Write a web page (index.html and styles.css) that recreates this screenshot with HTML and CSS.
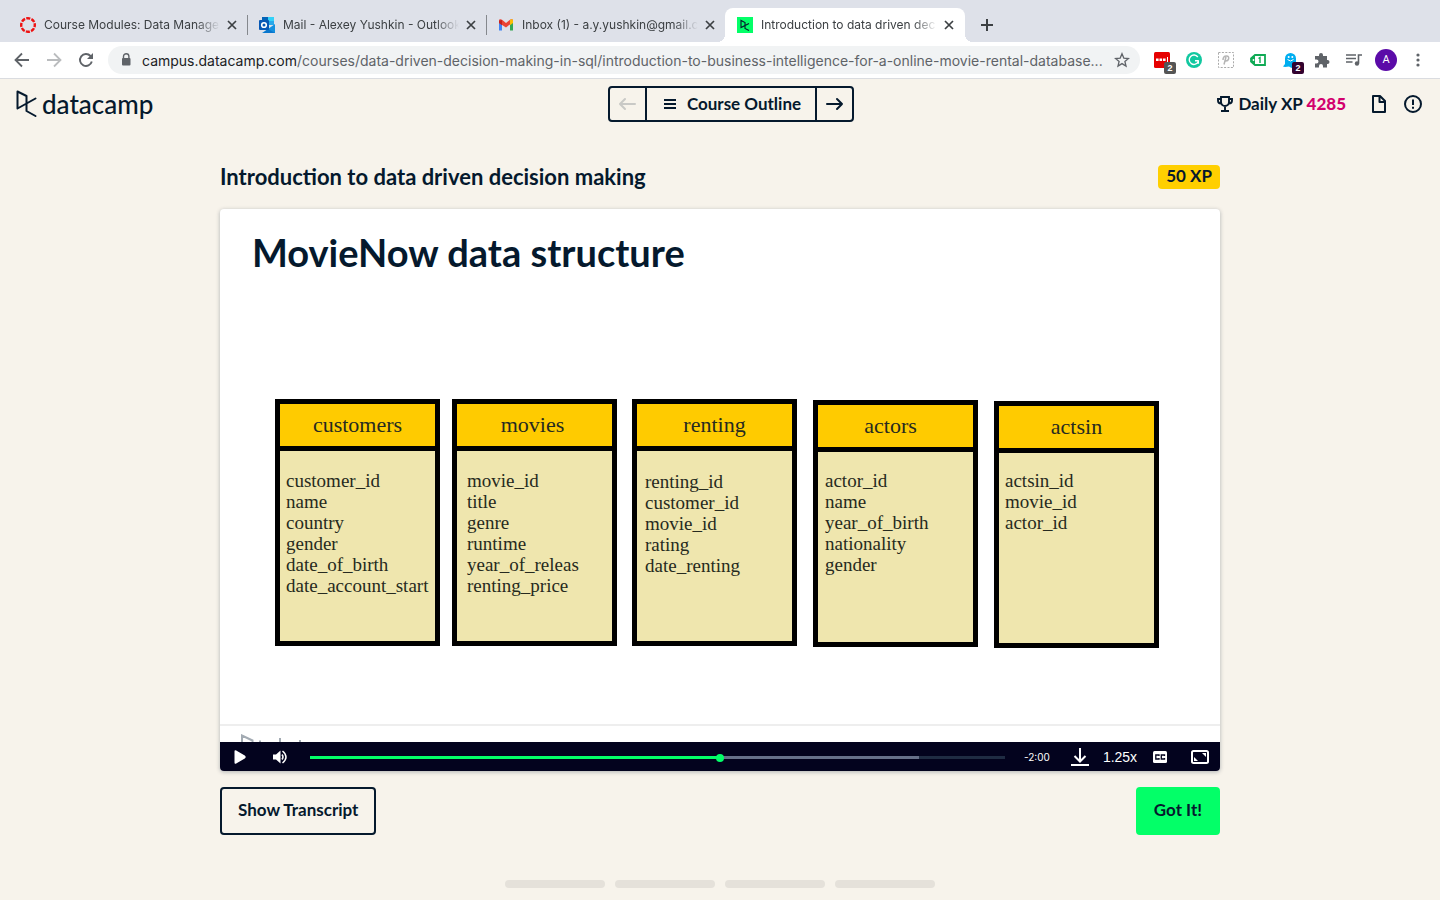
FILE: index.html
```html
<!DOCTYPE html>
<html lang="en">
<head>
<meta charset="utf-8">
<meta name="viewport" content="width=device-width, initial-scale=1">
<title>Introduction to data driven decision making</title>
<link rel="stylesheet" href="styles.css">
</head>
<body>
<svg class="defs" aria-hidden="true">
  <symbol id="close" viewBox="0 0 16 16"><path d="M4 4l8 8M12 4l-8 8" fill="none" stroke="#3c4043" stroke-width="1.700"/></symbol>
  <symbol id="mark" viewBox="0 0 22 28"><path d="M19.500 8.500L1.500 18.500V1.500L10.500 6v15l9 5" fill="none" stroke="currentColor" stroke-width="2" stroke-linejoin="round" stroke-linecap="round"/></symbol>
</svg>

<div class="tabs" role="tablist">
  <div class="tab" role="tab">
    <svg class="fav" viewBox="0 0 16 16"><circle cx="8" cy="8" r="6.800" fill="none" stroke="#ee1111" stroke-width="2.400" stroke-dasharray="4.100 1.240" stroke-dashoffset="2"/></svg>
    <span class="tab-title">Course Modules: Data Manage</span>
    <button class="tab-close" aria-label="Close tab"><svg><use href="#close"/></svg></button>
  </div>
  <div class="tab split" role="tab">
    <svg class="fav" viewBox="0 0 16 16"><path d="M3 0h12v8H3z" fill="#28a8ea"/><path d="M3 0h6v4H3z" fill="#0364b8"/><path d="M9 0h6v4H9z" fill="#33d1f8"/><path d="M16 7v9H3l6-4z" fill="#1490df"/><path d="M16 16H4l5-4z" fill="#0a76cc"/><rect y="3" width="10" height="10" rx="1" fill="#0758b5"/><circle cx="5" cy="8" r="2.300" fill="none" stroke="#fff" stroke-width="1.600"/></svg>
    <span class="tab-title">Mail - Alexey Yushkin - Outlook</span>
    <button class="tab-close" aria-label="Close tab"><svg><use href="#close"/></svg></button>
  </div>
  <div class="tab split" role="tab">
    <svg class="fav" viewBox="0 0 16 16"><path d="M1 4v9.500h3V6z" fill="#4285f4"/><path d="M15 4v9.500h-3V6z" fill="#34a853"/><path d="M1 3.500C1 2 3 2 4 2.800L8 6l4-3.200c1-.8 3-.8 3 .7V5l-7 5.500L1 6z" fill="#ea4335"/><path d="M12 3l1-.7c1-.4 2 .2 2 1.200V6l-3 2.300z" fill="#fbbc04"/><path d="M1 3.800V6l3 2.300V3z" fill="#c5221f"/></svg>
    <span class="tab-title">Inbox (1) - a.y.yushkin@gmail.c</span>
    <button class="tab-close" aria-label="Close tab"><svg><use href="#close"/></svg></button>
  </div>
  <div class="tab active" role="tab" aria-selected="true">
    <svg class="fav" viewBox="0 0 16 16"><path d="M0 0h16v16H0z" fill="#03ff68"/><path d="M12 6.500L4 10.500v-7l4 2v6l4 2" fill="none" stroke="#05192d" stroke-width="1.100"/></svg>
    <span class="tab-title">Introduction to data driven dec</span>
    <button class="tab-close" aria-label="Close tab"><svg><use href="#close"/></svg></button>
  </div>
  <button class="new-tab" aria-label="New tab"><svg viewBox="0 0 16 16"><path d="M8 2v12M2 8h12" stroke="#3c4043" stroke-width="2"/></svg></button>
</div>

<div class="toolbar">
  <button class="tool" aria-label="Back"><svg viewBox="0 0 16 16"><path d="M15 8H2M8 1.500L1.500 8 8 14.500" fill="none" stroke="#5f6368" stroke-width="1.800"/></svg></button>
  <button class="tool" aria-label="Forward"><svg viewBox="0 0 16 16"><path d="M1 8h13M8 1.500L14.500 8 8 14.500" fill="none" stroke="#babcbe" stroke-width="1.800"/></svg></button>
  <button class="tool" aria-label="Reload"><svg viewBox="0 0 16 16"><path d="M13.800 9.500A6 6 0 1 1 12.500 4L14 5.500" fill="none" stroke="#5f6368" stroke-width="1.900"/><path d="M15 1v6H9z" fill="#5f6368"/></svg></button>
  <div class="omnibox">
    <svg class="lock" viewBox="0 0 16 16"><path d="M5.500 7V4.500a2.700 2.700 0 0 1 5.400 0V7" fill="none" stroke="#5f6368" stroke-width="1.400"/><rect x="4" y="6" width="8.500" height="7.500" rx="1" fill="#5f6368"/></svg>
    <div class="url" role="textbox" aria-label="Address" tabindex="0"><span class="host">campus.datacamp.com</span>/courses/data-driven-decision-making-in-sql/introduction-to-business-intelligence-for-a-online-movie-rental-database...</div>
    <button class="star" aria-label="Bookmark"><svg viewBox="0 0 16 16"><path d="M8 1.800l1.800 4.300 4.700.4-3.600 3 1.100 4.600L8 11.600l-4 2.500 1.100-4.600-3.600-3 4.700-.4z" fill="none" stroke="#5f6368" stroke-width="1.300"/></svg></button>
  </div>
  <div class="extensions">
    <button class="tool" aria-label="LastPass"><svg viewBox="0 0 16 16"><rect width="16" height="16" rx="1.500" fill="#e60000"/><path d="M2 6.500h2.600v2.500H2zM5.500 6.500h2.600v2.500H5.500zM9 6.500h2.600v2.500H9zM13 5h1v5h-1z" fill="#fff"/></svg><span class="count">2</span></button>
    <button class="tool" aria-label="Grammarly"><svg viewBox="0 0 16 16"><circle cx="8" cy="8" r="8" fill="#11c8a0"/><path d="M11.800 5A4.700 4.700 0 1 0 12.300 9.500M12.800 8.800H9M12.300 8.800v3" fill="none" stroke="#fff" stroke-width="1.400"/></svg></button>
    <button class="tool" aria-label="Page extension"><svg viewBox="0 0 16 16"><rect x=".5" y=".5" width="15" height="15" fill="none" stroke="#aaa" stroke-dasharray="2 1.400"/><path d="M6 12.500L8 5M5 8c0-2.500 1.500-4 3.500-4S11 5.500 10.600 7 8.500 9.200 7 9" fill="none" stroke="#b5b5b5" stroke-width="1.500"/></svg></button>
    <button class="tool" aria-label="Tag extension"><svg viewBox="0 0 16 16"><path d="M5 3h10v10H5L1 9.500v-3z" fill="#fff" stroke="#10aa55" stroke-width="1.800"/><path d="M1 6.500L5 3v10L1 9.500z" fill="#10aa55"/><circle cx="3.500" cy="8" r=".9" fill="#fff"/><path d="M8.500 6.500L10 5.500v5.500" fill="none" stroke="#10aa55" stroke-width="1.400"/></svg></button>
    <button class="tool" aria-label="Ghostery"><svg viewBox="0 0 16 16"><path d="M3 12V6.500a5.500 5.500 0 0 1 11 0V15l-2.500-1-2 2-2.500-1.500L3 15l-2-.5z" fill="#00aef0"/><circle cx="6.700" cy="5" r="1" fill="#fff"/><circle cx="10.300" cy="5" r="1" fill="#fff"/><path d="M5.500 7.500q3 3 6 0" fill="none" stroke="#fff"/></svg><span class="count plum">2</span></button>
    <button class="tool" aria-label="Extensions"><svg viewBox="0 0 16 16"><path d="M1 4h4V3a2 2 0 0 1 4 0v1h4v4h.500a2 2 0 0 1 0 4H13v3.500H9V14a2 2 0 0 0-4 0v1.500H1v-4h1.500a2 2 0 0 0 0-4H1z" fill="#5f6368"/></svg></button>
    <button class="tool" aria-label="Media"><svg viewBox="0 0 16 16"><path d="M0 3h10M0 6.500h10M0 10h6.500M12.500 11V3H16" fill="none" stroke="#5f6368" stroke-width="1.600"/><circle cx="11" cy="11.500" r="2.200" fill="#5f6368"/></svg></button>
    <button class="tool" aria-label="Profile"><span class="avatar">A</span></button>
    <button class="tool" aria-label="Menu"><svg viewBox="0 0 16 16"><circle cx="8" cy="3" r="1.600" fill="#5f6368"/><circle cx="8" cy="8" r="1.600" fill="#5f6368"/><circle cx="8" cy="13" r="1.600" fill="#5f6368"/></svg></button>
  </div>
</div>

<header class="site-header">
  <a class="logo" href="#"><svg><use href="#mark"/></svg><span>datacamp</span></a>
  <nav class="outline" aria-label="Course">
    <button class="step" disabled aria-label="Previous"><svg viewBox="0 0 18 18"><path d="M17 9H2M7 4L2 9l5 5" fill="none" stroke="#c9c9c6" stroke-width="2" stroke-linecap="round" stroke-linejoin="round"/></svg></button>
    <button class="contents"><svg viewBox="0 0 12 12"><path d="M0 2h12M0 6h12M0 10h12" stroke="#05192d" stroke-width="2"/></svg><span>Course Outline</span></button>
    <button class="step" aria-label="Next"><svg viewBox="0 0 18 18"><path d="M1 9h15M11 4l5 5-5 5" fill="none" stroke="#05192d" stroke-width="2" stroke-linecap="round" stroke-linejoin="round"/></svg></button>
  </nav>
  <div class="status">
    <div class="xp"><svg viewBox="0 0 16 16"><path d="M4 1h8v5a4 4 0 0 1-8 0zM4 3H1v1.500A3 3 0 0 0 4 7.500M12 3h3v1.500a3 3 0 0 1-3 3M8 10v4M4 15h8" fill="none" stroke="#05192d" stroke-width="1.900"/></svg><span>Daily XP <b>4285</b></span></div>
    <button class="status-button" aria-label="Slides"><svg viewBox="0 0 18 18"><path d="M3 1h7l5 5v11H3zM9.500 1v6H15" fill="none" stroke="#05192d" stroke-width="2" stroke-linejoin="round"/></svg></button>
    <button class="status-button" aria-label="Report an issue"><svg viewBox="0 0 18 18"><circle cx="9" cy="9" r="8" fill="none" stroke="#05192d" stroke-width="2"/><path d="M9 4.500v5.500M9 11.800v2" stroke="#05192d" stroke-width="2"/></svg></button>
  </div>
</header>

<main class="lesson">
  <div class="lesson-head">
    <h1>Introduction to data driven decision making</h1>
    <span class="badge">50 XP</span>
  </div>

  <section class="player">
    <div class="slide">
      <h2>MovieNow data structure</h2>
      <div class="diagram">
        <section class="entity customers"><h3>customers</h3><ul><li>customer_id</li><li>name</li><li>country</li><li>gender</li><li>date_of_birth</li><li>date_account_start</li></ul></section>
        <section class="entity movies"><h3>movies</h3><ul><li>movie_id</li><li>title</li><li>genre</li><li>runtime</li><li>year_of_releas</li><li>renting_price</li></ul></section>
        <section class="entity renting"><h3>renting</h3><ul><li>renting_id</li><li>customer_id</li><li>movie_id</li><li>rating</li><li>date_renting</li></ul></section>
        <section class="entity actors"><h3>actors</h3><ul><li>actor_id</li><li>name</li><li>year_of_birth</li><li>nationality</li><li>gender</li></ul></section>
        <section class="entity actsin"><h3>actsin</h3><ul><li>actsin_id</li><li>movie_id</li><li>actor_id</li></ul></section>
      </div>
      <div class="slide-foot"><svg viewBox="0 0 64 8"><path d="M2 8V1.500L12.500 6.500V8M40 4v4M60 6v2M19 7.500h2" fill="none" stroke="#a3abb3" stroke-width="2"/></svg></div>
    </div>
    <div class="controls">
      <button class="control" aria-label="Play"><svg viewBox="0 0 16 16"><path d="M2.500 2.500v11q0 2 1.700 1l8.600-5q1.800-1.500 0-3l-8.600-5Q2.500.5 2.500 2.500z" fill="#fff"/></svg></button>
      <button class="control" aria-label="Volume"><svg viewBox="0 0 16 16"><path d="M1 5.500h3l4.500-4v13L4 10.500H1z" fill="#fff"/><path d="M10 5.500q2 2.500 0 5M10.500 2q7 6 0 12" fill="none" stroke="#fff" stroke-width="1.500"/></svg></button>
      <input class="seek" type="range" min="0" max="1000" value="591" aria-label="Seek">
      <span class="time">-2:00</span>
      <button class="control" aria-label="Download"><svg class="wide" viewBox="0 0 18 18"><path d="M9 0v13M3.500 8L9 13.500 14.500 8M0 17h18" fill="none" stroke="#fff" stroke-width="2"/></svg></button>
      <button class="control speed">1.25x</button>
      <button class="control" aria-label="Captions"><svg viewBox="0 0 16 16"><rect x="1" y="2" width="14" height="12" rx="1.500" fill="#fff"/><path d="M7 7V6H3.800v4H7V9M12.500 7V6H9.300v4h3.200V9" fill="none" stroke="#03031e" stroke-width="1.300"/></svg></button>
      <button class="control" aria-label="Full screen"><svg class="wide" viewBox="0 0 18 18"><rect x="1" y="3" width="16" height="12" rx="1.500" fill="none" stroke="#fff" stroke-width="2"/><path d="M11 5h4v4zM3 9v4h4z" fill="#fff"/></svg></button>
    </div>
  </section>

  <div class="actions">
    <button class="button">Show Transcript</button>
    <button class="button primary">Got It!</button>
  </div>
</main>

<footer class="progress"><span></span><span></span><span></span><span></span></footer>
</body>
</html>
```

FILE: styles.css
```css
* { box-sizing: border-box; }

body {
  margin: 0;
  min-height: 100vh;
  display: flex;
  flex-direction: column;
  background: #f7f3eb;
  color: #05192d;
  font-family: Lato, "Liberation Sans", sans-serif;
}

button {
  margin: 0;
  padding: 0;
  border: 0;
  background: none;
  color: inherit;
  font: inherit;
  display: flex;
  align-items: center;
  justify-content: center;
}

svg { display: block; flex: none; }
.defs { position: absolute; width: 0; height: 0; }

/* Browser tabs */
.tabs {
  display: flex;
  padding: 8px 8px 0;
  background: #dee1e9;
  font-family: Inter, Roboto, sans-serif;
}
.tab {
  position: relative;
  display: flex;
  align-items: center;
  width: 239px;
  height: 34px;
  padding: 0 7px 0 12px;
  color: #3c4043;
  font-size: 12px;
}
.fav { width: 16px; height: 16px; margin-right: 8px; }
.tab-title {
  flex: 1;
  margin-right: 4px;
  padding-bottom: 2px;
  overflow: hidden;
  white-space: nowrap;
  -webkit-mask-image: linear-gradient(to left, transparent, #000 24px);
  mask-image: linear-gradient(to left, transparent, #000 24px);
}
.tab-close, .tab-close svg { width: 16px; height: 16px; }
.split::before {
  content: "";
  position: absolute;
  left: 0;
  top: 7px;
  width: 1px;
  height: 20px;
  background: #85888d;
}
.active {
  width: 240px;
  padding-right: 8px;
  background: #fff;
  border-radius: 8px 8px 0 0;
}
.active::before, .active::after {
  content: "";
  position: absolute;
  bottom: 0;
  width: 8px;
  height: 8px;
}
.active::before { right: 100%; background: radial-gradient(circle at 0 0, transparent 8px, #fff 8px); }
.active::after { left: 100%; background: radial-gradient(circle at 100% 0, transparent 8px, #fff 8px); }
.new-tab { width: 28px; height: 34px; margin-left: 8px; }
.new-tab svg { width: 16px; height: 16px; }

/* Browser toolbar */
.toolbar {
  display: flex;
  align-items: center;
  height: 37px;
  padding: 0 6px;
  background: #fff;
  border-bottom: 1px solid #dadce0;
  font-family: Roboto, sans-serif;
}
.tool { position: relative; width: 32px; height: 28px; flex: none; }
.tool svg { width: 16px; height: 16px; }
.omnibox {
  flex: 1;
  min-width: 0;
  display: flex;
  align-items: center;
  height: 28px;
  margin: 0 6px;
  padding: 0 10px;
  border-radius: 14px;
  background: #f1f3f4;
}
.lock { width: 16px; height: 16px; margin-right: 8px; }
.url {
  flex: 1;
  overflow: hidden;
  white-space: nowrap;
  text-overflow: ellipsis;
  margin-right: 8px;
  color: #5f6368;
  font-family: Inter, Roboto, sans-serif;
  font-size: 14px;
}
.host { color: #202124; }
.star svg { width: 16px; height: 16px; }
.extensions { display: flex; }
.count {
  position: absolute;
  left: 18px;
  top: 16px;
  width: 12px;
  height: 12px;
  border-radius: 2px;
  background: #555;
  color: #fff;
  font: bold 9px/12px "Liberation Sans", sans-serif;
  text-align: center;
}
.plum { background: #33022f; }
.avatar {
  width: 22px;
  height: 22px;
  border-radius: 50%;
  background: #5b0ba8;
  color: #fff;
  font-size: 11px;
  line-height: 22px;
}

/* Site header */
.site-header {
  display: grid;
  grid-template-columns: 1fr auto 1fr;
  align-items: center;
  height: 50px;
  padding: 0 18px 0 16px;
}
.logo { display: flex; color: inherit; text-decoration: none; }
.logo svg { width: 22px; height: 28px; margin-right: 4px; }
.logo span { font-size: 26px; line-height: 28px; font-weight: 500; }
.outline {
  display: flex;
  height: 36px;
  margin-left: 24px;
  border: 2px solid #05192d;
  border-radius: 4px;
  font-size: 17px;
  font-weight: 700;
}
.step { width: 35px; }
.step svg { width: 18px; height: 18px; }
.contents {
  gap: 11px;
  padding: 0 14px 0 17px;
  border: solid #05192d;
  border-width: 0 2px;
}
.contents svg { width: 12px; height: 12px; }
.contents span, .xp span { padding-bottom: 2px; }
.status { display: flex; justify-content: flex-end; align-items: center; gap: 16px; }
.xp { display: flex; align-items: center; gap: 5px; margin-right: 8px; font-size: 17px; font-weight: 700; }
.xp svg { width: 16px; height: 16px; }
.xp b { color: #d2006e; }
.status-button, .status-button svg { width: 18px; height: 18px; }

/* Lesson */
.lesson {
  width: 100%;
  max-width: 1000px;
  margin: 36px auto 0;
}
.lesson-head {
  display: flex;
  justify-content: space-between;
  align-items: center;
  margin-bottom: 20px;
}
h1 { margin: 0; font-size: 22px; line-height: 24px; font-weight: 700; }
.badge {
  height: 24px;
  padding: 0 8px;
  border-radius: 4px;
  background: #ffcf00;
  font-size: 17px;
  line-height: 22px;
  font-weight: 700;
}
.player {
  overflow: hidden;
  border-radius: 4px;
  background: #fff;
  box-shadow: 0 1px 4px rgba(5, 25, 45, 0.3);
}
.slide { display: flex; flex-direction: column; }
h2 {
  margin: 0;
  padding: 20px 32px 0;
  font-size: 38px;
  line-height: 46px;
  font-weight: 700;
}
.diagram { position: relative; height: 449px; }
.entity {
  position: absolute;
  top: 124px;
  width: 165px;
  height: 247px;
  border: 5px solid #000;
  background: #efe6ae;
  color: #262a20;
  font-family: "Liberation Serif", serif;
}
.entity h3 {
  margin: 0;
  border-bottom: 5px solid #000;
  background: #ffcb00;
  font-size: 22px;
  line-height: 42px;
  font-weight: 400;
  text-align: center;
}
.entity ul {
  margin: 0;
  padding: 19px 0 0 6px;
  list-style: none;
  font-size: 19px;
  line-height: 21px;
  white-space: nowrap;
}
.customers { left: 55px; }
.movies { left: 232px; }
.renting { left: 412px; }
.actors { left: 593px; top: 125px; }
.actsin { left: 774px; top: 126px; }
.movies h3 { padding-right: 4px; }
.actors h3 { padding-right: 10px; }
.movies ul { padding-left: 10px; }
.renting ul { padding: 20px 0 0 8px; }
.actors ul { padding: 18px 0 0 7px; }
.actsin ul { padding-top: 17px; }
.slide-foot {
  display: flex;
  align-items: flex-end;
  height: 18px;
  padding-left: 20px;
  border-top: 2px solid #eee;
}
.slide-foot svg { width: 64px; height: 8px; }

.controls {
  display: flex;
  align-items: center;
  height: 29px;
  background: #03031e;
  color: #fff;
}
.control { width: 40px; height: 29px; flex: none; }
.control svg { width: 16px; height: 16px; }
.control svg.wide { width: 18px; height: 18px; }
.speed { font-family: "Liberation Sans", sans-serif; font-size: 14px; }
.seek {
  -webkit-appearance: none;
  appearance: none;
  flex: 1;
  min-width: 0;
  height: 9px;
  margin: 2px 19px 0 10px;
  background: linear-gradient(to right, #03ff68 59%, #66718a 59%, #66718a 87.600%, #1f2c43 87.600%) center / 100% 3px no-repeat;
}
.seek::-webkit-slider-thumb {
  -webkit-appearance: none;
  width: 8px;
  height: 8px;
  border-radius: 50%;
  background: #03ff68;
}
.time { width: 36px; font: 10px Inter, sans-serif; }

.actions { display: flex; justify-content: space-between; margin-top: 16px; }
.button {
  height: 48px;
  padding: 0 16px 3px;
  border: 2px solid #05192d;
  border-radius: 4px;
  font-size: 17px;
  font-weight: 700;
}
.primary { border-color: #03ff68; background: #03ff68; }

.progress {
  display: flex;
  justify-content: center;
  gap: 10px;
  margin-top: auto;
  padding: 16px 0 12px;
}
.progress span { width: 100px; height: 8px; border-radius: 4px; background: #e5e1da; }
```
